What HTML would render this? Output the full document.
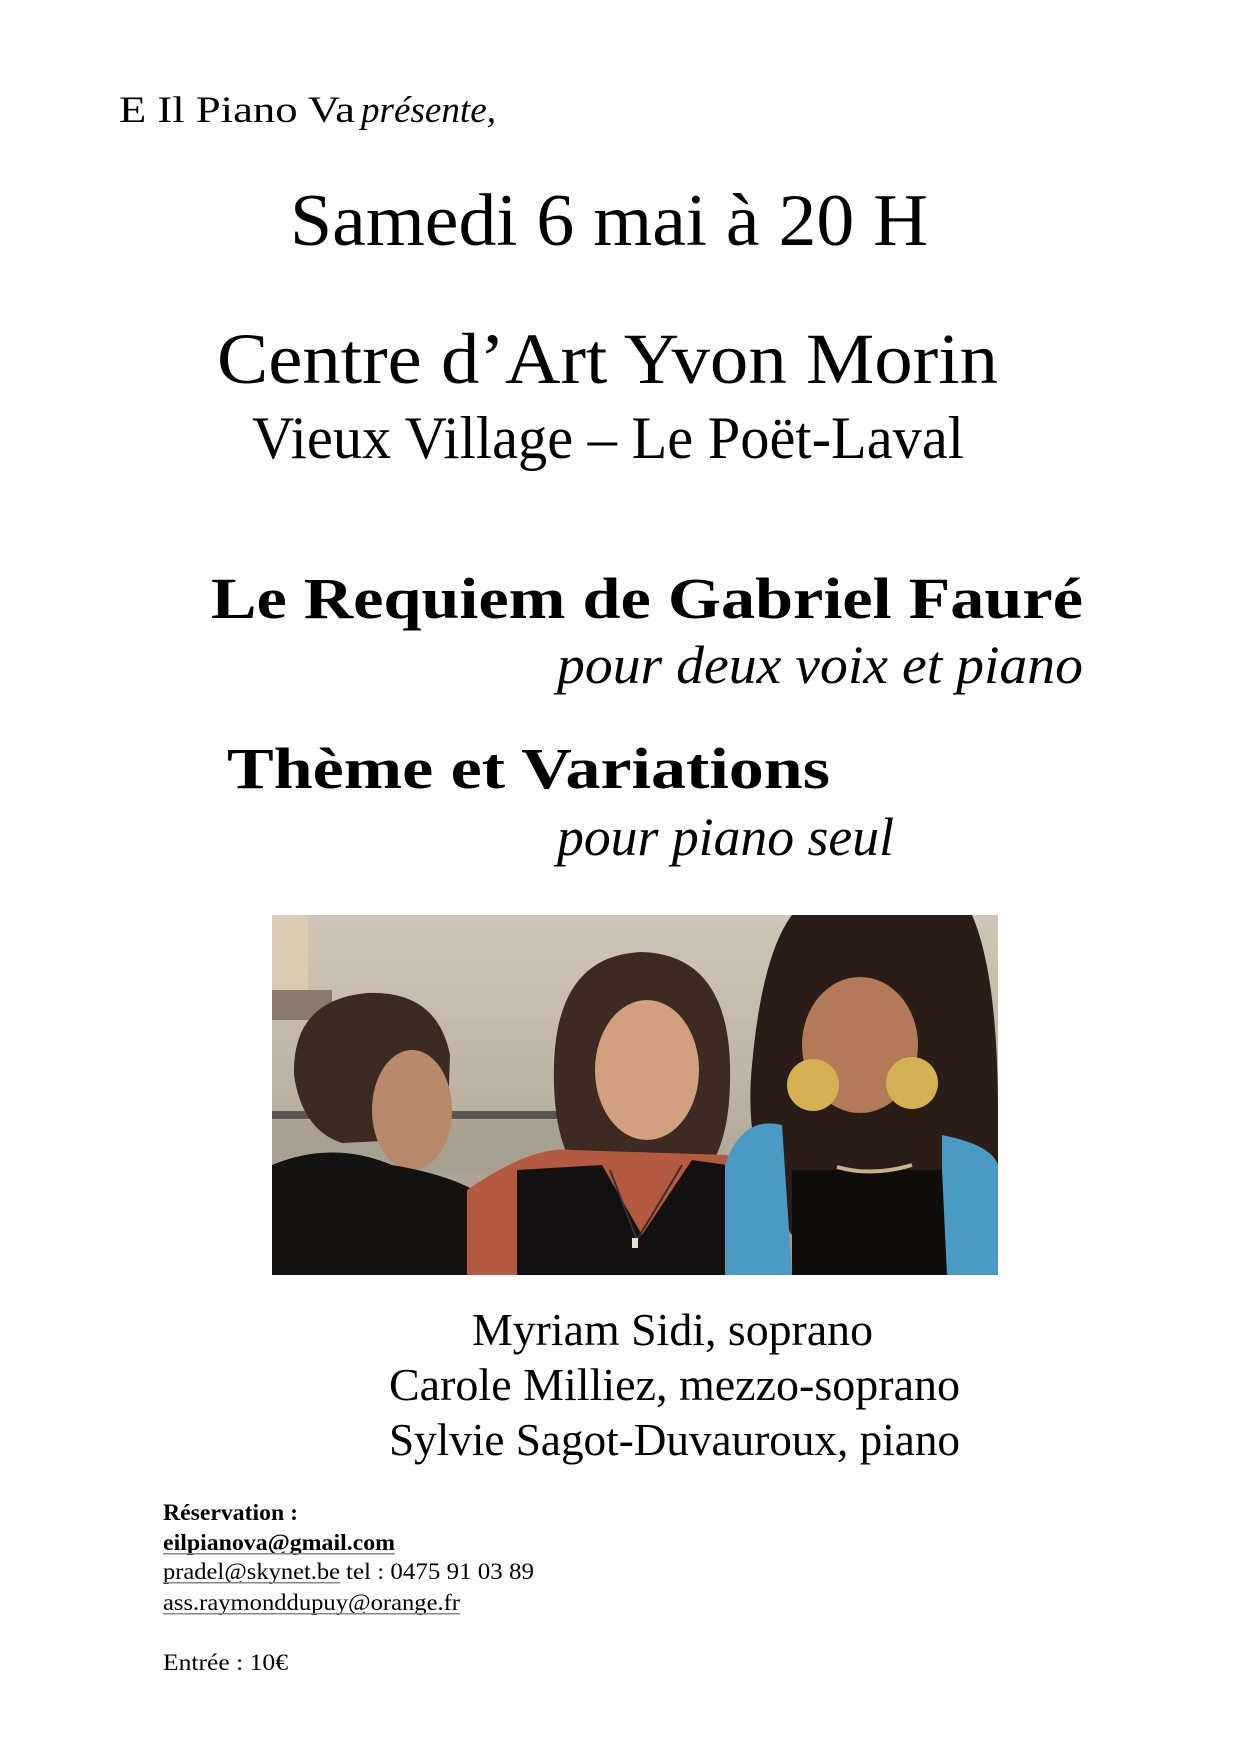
<!DOCTYPE html>
<html><head><meta charset="utf-8"><style>
html,body{margin:0;padding:0;background:#fff;}
svg{display:block;}
text{font-family:"Liberation Serif",serif;fill:#000;}
</style></head><body>
<svg width="1240" height="1755" viewBox="0 0 1240 1755" xmlns="http://www.w3.org/2000/svg">
<rect width="1240" height="1755" fill="#fff"/>
<text x="119" y="122" font-size="37" textLength="236" lengthAdjust="spacingAndGlyphs">E Il Piano Va</text>
<text x="361" y="122" font-size="37" font-style="italic" textLength="135" lengthAdjust="spacingAndGlyphs">présente,</text>
<text x="290" y="245" font-size="74" textLength="638" lengthAdjust="spacingAndGlyphs">Samedi 6 mai à 20 H</text>
<text x="217" y="383" font-size="72" textLength="781" lengthAdjust="spacingAndGlyphs">Centre d’Art Yvon Morin</text>
<text x="252" y="458" font-size="60" textLength="712" lengthAdjust="spacingAndGlyphs">Vieux Village – Le Poët-Laval</text>
<text x="211" y="618" font-size="58" font-weight="bold" textLength="872" lengthAdjust="spacingAndGlyphs">Le Requiem de Gabriel Fauré</text>
<text x="557" y="683" font-size="54" font-style="italic" textLength="526" lengthAdjust="spacingAndGlyphs">pour deux voix et piano</text>
<text x="227" y="788" font-size="58" font-weight="bold" textLength="603" lengthAdjust="spacingAndGlyphs">Thème et Variations</text>
<text x="557" y="855" font-size="54" font-style="italic" textLength="337" lengthAdjust="spacingAndGlyphs">pour piano seul</text>

<svg x="272" y="915" width="726" height="360" viewBox="0 0 726 360">
<defs>
<linearGradient id="bg" x1="0" y1="0" x2="0" y2="1">
<stop offset="0" stop-color="#cfc6b6"/><stop offset="0.5" stop-color="#bdb3a2"/><stop offset="1" stop-color="#9d9486"/>
</linearGradient>
</defs>
<rect width="726" height="360" fill="url(#bg)"/>
<rect x="0" y="0" width="36" height="75" fill="#d8ccb2"/>
<rect x="0" y="75" width="60" height="30" fill="#8a7a6a"/>
<rect x="0" y="196" width="300" height="8" fill="#5a5650"/>
<rect x="0" y="205" width="300" height="55" fill="#a8a090"/>
<path d="M22 160 Q20 85 95 78 Q165 75 178 140 L176 200 Q160 230 130 225 L70 228 Q30 215 22 160Z" fill="#3a2a22"/>
<ellipse cx="140" cy="195" rx="40" ry="60" fill="#b8886a"/>
<path d="M0 250 Q60 225 120 250 Q180 260 210 280 L215 360 L0 360Z" fill="#141210"/>
<path d="M282 150 Q285 40 370 37 Q455 40 458 150 Q460 230 430 262 L310 262 Q280 230 282 150Z" fill="#3d2a22"/>
<ellipse cx="375" cy="155" rx="52" ry="70" fill="#d2a080"/>
<path d="M195 275 Q260 230 300 235 L455 240 Q480 260 482 360 L195 360Z" fill="#b35a40"/>
<path d="M245 255 L330 250 L370 320 L420 245 L455 250 L455 360 L245 360Z" fill="#121010"/>
<path d="M338 255 L365 325 L410 250" fill="none" stroke="#3a3030" stroke-width="2"/>
<rect x="360" y="323" width="6" height="10" fill="#e8e0d0"/>
<path d="M520 0 L700 0 Q726 60 726 200 L726 320 Q690 340 640 330 L520 320 Q470 250 480 150 Q490 40 520 0Z" fill="#2a1c16"/>
<ellipse cx="588" cy="130" rx="58" ry="68" fill="#b27a58"/>
<circle cx="541" cy="170" r="26" fill="#d4b152"/>
<circle cx="640" cy="168" r="26" fill="#d4b152"/>
<path d="M453 250 Q470 200 510 210 L520 360 L453 360Z" fill="#4a9ac4"/>
<path d="M670 220 Q720 230 726 250 L726 360 L670 360Z" fill="#4a9ac4"/>
<path d="M520 255 L670 255 L675 360 L520 360Z" fill="#100c0a"/>
<path d="M565 252 Q600 262 640 250" fill="none" stroke="#c8b090" stroke-width="4"/>
</svg>

<text x="472" y="1345" font-size="46" textLength="401" lengthAdjust="spacingAndGlyphs">Myriam Sidi, soprano</text>
<text x="389" y="1400" font-size="46" textLength="571" lengthAdjust="spacingAndGlyphs">Carole Milliez, mezzo-soprano</text>
<text x="389" y="1455" font-size="46" textLength="571" lengthAdjust="spacingAndGlyphs">Sylvie Sagot-Duvauroux, piano</text>

<text x="163" y="1520" font-size="23" font-weight="bold" textLength="135" lengthAdjust="spacingAndGlyphs">Réservation :</text>
<text x="163" y="1550" font-size="23" font-weight="bold" textLength="232" lengthAdjust="spacingAndGlyphs">eilpianova@gmail.com</text>
<rect x="163" y="1553" width="232" height="1.5" fill="#888"/>
<text x="163" y="1579" font-size="23" textLength="177" lengthAdjust="spacingAndGlyphs">pradel@skynet.be</text>
<rect x="163" y="1582" width="177" height="1.5" fill="#888"/>
<text x="346" y="1579" font-size="23" textLength="188" lengthAdjust="spacingAndGlyphs">tel : 0475 91 03 89</text>
<text x="163" y="1610" font-size="23" textLength="297" lengthAdjust="spacingAndGlyphs">ass.raymonddupuy@orange.fr</text>
<rect x="163" y="1613" width="297" height="1.5" fill="#888"/>
<text x="163" y="1670" font-size="23" textLength="125" lengthAdjust="spacingAndGlyphs">Entrée : 10€</text>
</svg>
</body></html>
